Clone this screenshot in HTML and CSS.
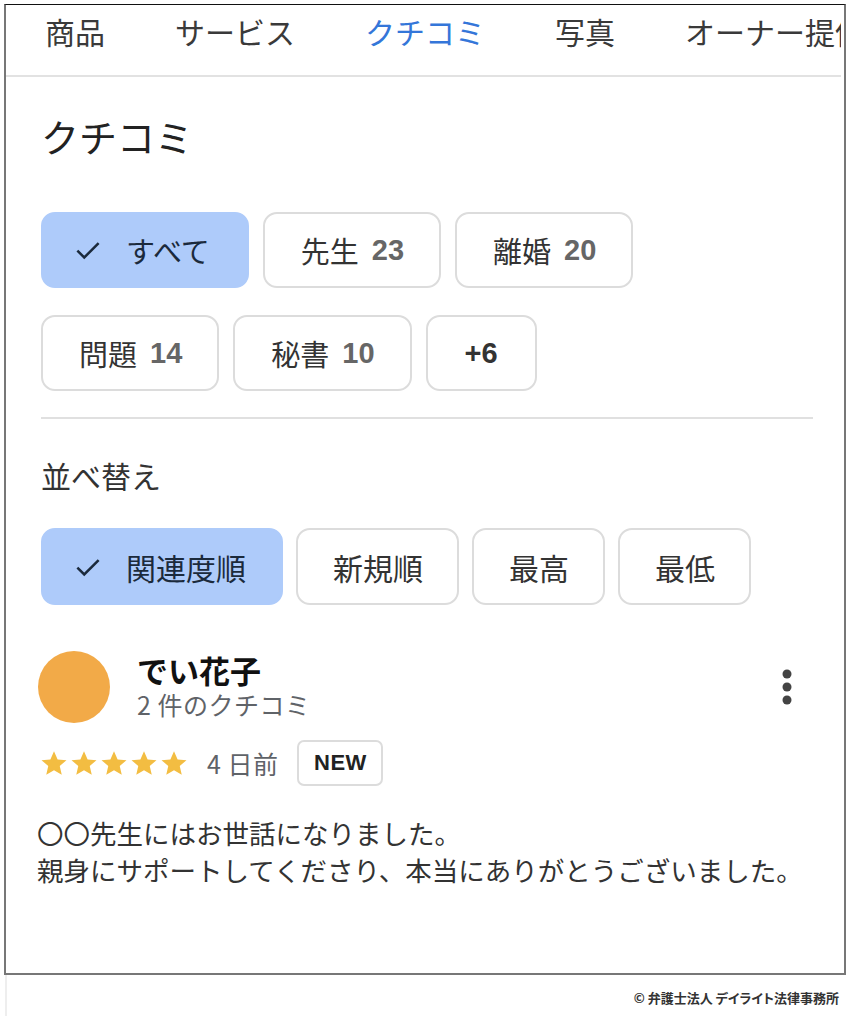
FILE: index.html
```html
<!DOCTYPE html>
<html lang="ja">
<head>
<meta charset="utf-8">
<link rel="stylesheet" href="styles.css">
</head>
<body>
<div class="frame">
  <nav class="tabs">
    <span class="tab">商品</span>
    <span class="tab">サービス</span>
    <span class="tab active">クチコミ</span>
    <span class="tab">写真</span>
    <span class="tab">オーナー提供</span>
  </nav>
  <div class="content">
    <h1 class="title">クチコミ</h1>
    <div class="chips">
      <span class="chip selected chip-all"><svg class="check" viewBox="0 0 24 24" width="30" height="30"><path d="M3.5 12.5 L9 18 L20.5 6.5" fill="none" stroke="#1b2a3c" stroke-width="2"/></svg>すべて</span>
      <span class="chip">先生<b class="num">23</b></span>
      <span class="chip">離婚<b class="num">20</b></span>
      <span class="chip">問題<b class="num">14</b></span>
      <span class="chip">秘書<b class="num">10</b></span>
      <span class="chip more">+6</span>
    </div>
    <hr class="divider">
    <div class="sort-label">並べ替え</div>
    <div class="chips sort">
      <span class="chip selected chip-sort"><svg class="check" viewBox="0 0 24 24" width="30" height="30"><path d="M3.5 12.5 L9 18 L20.5 6.5" fill="none" stroke="#1b2a3c" stroke-width="2"/></svg>関連度順</span>
      <span class="chip">新規順</span>
      <span class="chip">最高</span>
      <span class="chip">最低</span>
    </div>
    <div class="review-head">
      <div class="avatar"></div>
      <div class="reviewer">
        <div class="name">でい花子</div>
        <div class="count">2 件のクチコミ</div>
      </div>
      <svg class="dots" viewBox="0 0 10 36" width="10" height="36"><circle cx="5" cy="5" r="4.5" fill="#444"/><circle cx="5" cy="18" r="4.5" fill="#444"/><circle cx="5" cy="31" r="4.5" fill="#444"/></svg>
    </div>
    <div class="meta">
      <span class="stars">
        <svg viewBox="0 0 24 24" width="30" height="30"><path d="M12 2.5l2.9 6.6 7.1.6-5.4 4.7 1.6 7-6.2-3.7-6.2 3.7 1.6-7L2 9.7l7.1-.6z" fill="#f3bd42"/></svg><svg viewBox="0 0 24 24" width="30" height="30"><path d="M12 2.5l2.9 6.6 7.1.6-5.4 4.7 1.6 7-6.2-3.7-6.2 3.7 1.6-7L2 9.7l7.1-.6z" fill="#f3bd42"/></svg><svg viewBox="0 0 24 24" width="30" height="30"><path d="M12 2.5l2.9 6.6 7.1.6-5.4 4.7 1.6 7-6.2-3.7-6.2 3.7 1.6-7L2 9.7l7.1-.6z" fill="#f3bd42"/></svg><svg viewBox="0 0 24 24" width="30" height="30"><path d="M12 2.5l2.9 6.6 7.1.6-5.4 4.7 1.6 7-6.2-3.7-6.2 3.7 1.6-7L2 9.7l7.1-.6z" fill="#f3bd42"/></svg><svg viewBox="0 0 24 24" width="30" height="30"><path d="M12 2.5l2.9 6.6 7.1.6-5.4 4.7 1.6 7-6.2-3.7-6.2 3.7 1.6-7L2 9.7l7.1-.6z" fill="#f3bd42"/></svg>
      </span>
      <span class="ago">4 日前</span>
      <span class="badge">NEW</span>
    </div>
    <p class="review-text">〇〇先生にはお世話になりました。<br>親身にサポートしてくださり、本当にありがとうございました。</p>
  </div>
</div>
<footer class="footer">© 弁護士法人 デイライト法律事務所</footer>
</body>
</html>
```

FILE: styles.css
```css
* { box-sizing: border-box; }

html, body {
  margin: 0;
  padding: 0;
  background: #fff;
}

body {
  font-family: "Noto Sans CJK JP", "Noto Sans", sans-serif;
  color: #333;
}

.frame {
  margin: 4px 0 0 4px;
  width: 842px;
  height: 971px;
  border-top: 1px solid #111;
  border-left: 2px solid #777;
  border-right: 2px solid #777;
  border-bottom: 2px solid #777;
  overflow: hidden;
}

.tabs {
  display: flex;
  gap: 70px;
  height: 72px;
  padding: 6px 0 0 39px;
  border-bottom: 2px solid #e2e2e2;
  margin-right: 3px;
  white-space: nowrap;
  overflow: hidden;
}

.tab {
  font-size: 30px;
  line-height: 40px;
  color: #3a3a3a;
  flex: none;
}

.tab.active {
  color: #3476d9;
}

.content {
  padding: 0 31px 0 35px;
}

.title {
  margin: 35px 0 0 0;
  font-size: 38px;
  font-weight: 400;
  line-height: 48px;
  color: #222;
}

.chips {
  display: flex;
  flex-wrap: wrap;
  column-gap: 14px;
  row-gap: 27px;
  margin-top: 52px;
  width: 620px;
}

.chip {
  display: inline-flex;
  align-items: center;
  height: 76px;
  padding: 0 35px 0 36px;
  border: 2px solid #dcdcdc;
  border-radius: 14px;
  font-size: 29px;
  color: #333;
  background: #fff;
}

.chip .num {
  font-family: "Liberation Sans", Arial, sans-serif;
  font-weight: 700;
  font-size: 29px;
  color: #666;
  margin-left: 13px;
}

.chip.more {
  font-family: "Liberation Sans", Arial, sans-serif;
  font-weight: 700;
  font-size: 29px;
  padding: 0 37px;
}

.chip.selected {
  background: #aecbfa;
  border-color: #aecbfa;
  color: #1b2a3c;
  padding-left: 30px;
  padding-right: 37px;
}

.check {
  margin-right: 23px;
  flex: none;
}

.divider {
  border: 0;
  height: 2px;
  background: #e0e0e0;
  margin: 26px 0 0 0;
}

.sort-label {
  margin-top: 36px;
  font-size: 30px;
  line-height: 40px;
  color: #333;
}

.chips.sort {
  margin-top: 33px;
  width: auto;
  height: 77px;
  column-gap: 13px;
}

.chips.sort .chip {
  height: 77px;
  padding: 0 34px 0 35px;
  font-size: 30px;
}

.chips.sort .chip.selected {
  padding-left: 30px;
  padding-right: 35px;
}

.review-head {
  display: flex;
  align-items: center;
  margin-top: 46px;
}

.avatar {
  width: 72px;
  height: 72px;
  border-radius: 50%;
  background: #f2aa48;
  flex: none;
  margin-left: -3px;
}

.reviewer {
  margin-left: 27px;
  margin-top: -4px;
  flex: 1;
}

.name {
  font-size: 31px;
  font-weight: 700;
  line-height: 38px;
  color: #111;
}

.count {
  font-size: 25px;
  line-height: 30px;
  color: #5f6368;
  letter-spacing: 0.5px;
}

.dots {
  margin-right: 21px;
  flex: none;
}

.meta {
  display: flex;
  align-items: center;
  margin-top: 17px;
  height: 46px;
}

.stars {
  display: flex;
  gap: 0;
  margin-left: -2px;
}

.ago {
  margin-left: 18px;
  font-size: 25px;
  color: #5f6368;
  letter-spacing: 0.5px;
}

.badge {
  margin-left: 19px;
  height: 46px;
  width: 86px;
  display: inline-flex;
  align-items: center;
  justify-content: center;
  border: 2px solid #dcdcdc;
  border-radius: 7px;
  font-family: "Liberation Sans", Arial, sans-serif;
  font-weight: 700;
  font-size: 22px;
  color: #222;
  letter-spacing: 0.5px;
}

.review-text {
  margin: 28px 0 0 -4px;
  font-size: 26.5px;
  line-height: 37px;
  color: #333;
  white-space: nowrap;
}

.footer {
  margin-left: 5px;
  height: 41px;
  border-left: 2px solid #eee;
  text-align: right;
  padding-right: 11px;
  font-size: 13px;
  font-weight: 700;
  line-height: 46px;
  color: #333;
  font-feature-settings: "palt";
}
```
